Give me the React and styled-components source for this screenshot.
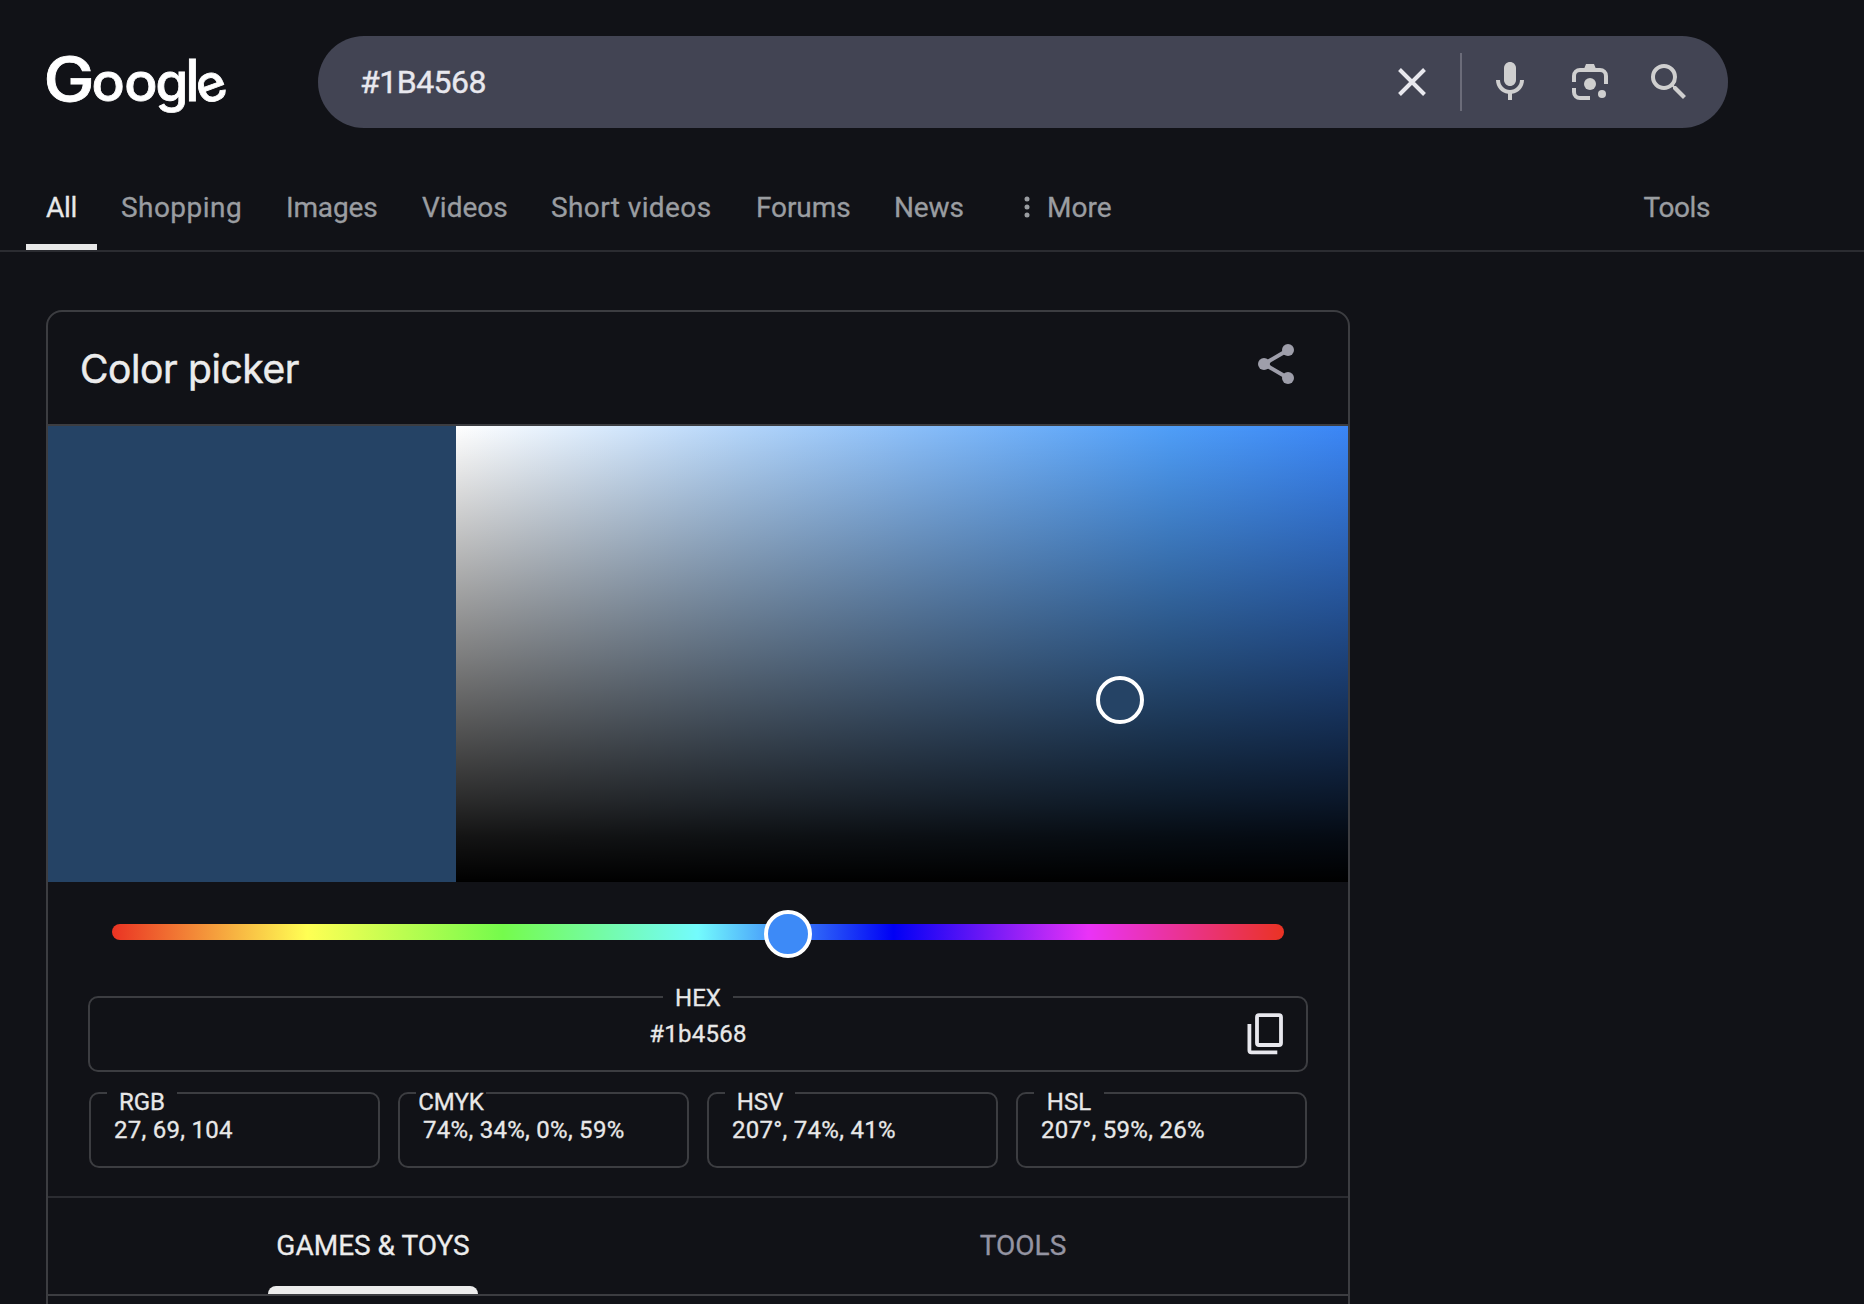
import React from "react";
import styled, { createGlobalStyle } from "styled-components";

const Global = createGlobalStyle`
  * { box-sizing: border-box; }
  html, body { margin: 0; background: #111217; }
  body { overflow: hidden; font-family: Roboto, "Liberation Sans", sans-serif; color: #e8e8e8; }
  svg { display: block; flex: none; }
`;

const Page = styled.div`
  width: 1864px;
  height: 1304px;
  overflow: hidden;
  background: #111217;
`;

const TopBar = styled.header`
  display: flex;
  height: 128px;
  padding: 36px 0 0 46px;
`;

const Logo = styled.div`
  display: flex;
  align-items: baseline;
  width: 272px;
  padding-top: 5px;
  font-family: Inter, sans-serif;
  font-weight: 500;
  line-height: 76px;
  color: #fff;
  -webkit-text-stroke: 0.8px #fff;
`;

const Letter = styled.span`
  display: flex;
  justify-content: center;
  flex: none;
  width: ${(p) => p.$w}px;
  font-size: ${(p) => p.$size}px;
  transform: rotate(${(p) => p.$tilt || 0}deg) scaleX(${(p) => p.$stretch || 1});
  transform-origin: 50% 60%;
`;

const SearchBox = styled.div`
  display: flex;
  align-items: center;
  width: 1410px;
  height: 92px;
  padding: 0 41px 0 42px;
  border-radius: 46px;
  background: #424453;
`;

const Query = styled.div`
  flex: 1;
  font-size: 32px;
  line-height: 40px;
  letter-spacing: -0.5px;
  color: #e8e8ee;
  -webkit-text-stroke: 0.4px #e8e8ee;
`;

const Separator = styled.div`
  width: 2px;
  height: 58px;
  margin: 0 24px 0 34px;
  background: #6b6c79;
`;

const LensSlot = styled.div`
  padding: 0 37px 0 38px;
`;

const Nav = styled.nav`
  display: flex;
  align-items: stretch;
  height: 124px;
  padding: 50px 154px 0 26px;
  border-bottom: 2px solid #2b2c31;
`;

const NavItem = styled.a`
  display: flex;
  align-items: flex-start;
  width: ${(p) => p.$w}px;
  padding: 13px 0 0 ${(p) => p.$pad || 0}px;
  margin-right: ${(p) => p.$gap || 0}px;
  font-size: 28px;
  line-height: 34px;
  letter-spacing: ${(p) => p.$track || 0}px;
  white-space: nowrap;
  color: ${(p) => (p.$active ? "#e8e8e8" : "#9a9da1")};
  -webkit-text-stroke: 0.3px currentColor;
  border-bottom: 6px solid ${(p) => (p.$active ? "#e8e8e8" : "transparent")};
`;

const Dots = styled.svg`
  margin: 5px 17px 0 0;
`;

const Spacer = styled.div`
  flex: 1;
`;

const Card = styled.main`
  width: 1304px;
  height: 1020px;
  margin: 58px 0 0 46px;
  border: 2px solid #3c3d41;
  border-radius: 16px;
`;

const CardHeader = styled.div`
  display: flex;
  justify-content: space-between;
  align-items: flex-start;
  height: 114px;
  padding: 28px 48px 0 32px;
  border-bottom: 2px solid #3c3d41;
`;

const Title = styled.h1`
  margin: 0;
  font-family: Inter, sans-serif;
  font-size: 39px;
  line-height: 57px;
  font-weight: 400;
  letter-spacing: -0.4px;
  color: #ececec;
  -webkit-text-stroke: 0.5px currentColor;
`;

const Picker = styled.div`
  display: flex;
  height: 456px;
`;

const Swatch = styled.div`
  width: 408px;
  background: #254365;
`;

const Shade = styled.div`
  position: relative;
  flex: 1;
  background: linear-gradient(
      to top,
      #000,
      rgba(0, 0, 0, 0.92) 10%,
      rgba(0, 0, 0, 0.83) 18%,
      rgba(0, 0, 0, 0.5) 50%,
      rgba(0, 0, 0, 0)
    ),
    linear-gradient(to right, #fff, #b3d5fa 32%, #88bdf9 52%, #4f9ef8 80%, #3b86f6);
`;

const Handle = styled.div`
  position: absolute;
  left: ${(p) => p.$x}px;
  top: ${(p) => p.$y}px;
  width: 48px;
  height: 48px;
  border: 4px solid #fff;
  border-radius: 50%;
  background: ${(p) => p.$fill};
`;

const Hue = styled.div`
  position: relative;
  height: 16px;
  margin: 42px 64px 0;
  border-radius: 8px;
  background: linear-gradient(
    to right,
    #ea3323,
    #ffff54 16.67%,
    #75fb4c 33.33%,
    #73fbfd 50%,
    #0000f5 66.67%,
    #ea33f7 83.33%,
    #ea3323
  );
`;

const HexField = styled.div`
  display: grid;
  grid-template-columns: 1fr auto 1fr;
  height: 76px;
  margin: 56px 40px 0;
  border: 2px solid #3c3d41;
  border-radius: 10px;
`;

const HexCenter = styled.div`
  grid-column: 2;
  display: flex;
  flex-direction: column;
  align-items: center;
  width: 140px;
  margin-top: -18px;
`;

const Label = styled.div`
  width: 70px;
  height: 36px;
  font-size: 24px;
  line-height: 36px;
  text-align: center;
  background: #111217;
  -webkit-text-stroke: 0.3px currentColor;
`;

const Value = styled.div`
  font-size: 24px;
  line-height: 36px;
  letter-spacing: 0.28px;
  white-space: nowrap;
  -webkit-text-stroke: 0.3px currentColor;
`;

const CopyButton = styled.div`
  grid-column: 3;
  justify-self: end;
  margin: 15px 23px 0 0;
`;

const Fields = styled.div`
  display: grid;
  grid-template-columns: repeat(4, 291px);
  gap: 18px;
  margin: 20px 41px 0;
`;

const Field = styled.div`
  height: 76px;
  border: 2px solid #3c3d41;
  border-radius: 10px;
`;

const FieldLabel = styled(Label)`
  height: 22px;
  margin: -2px 0 0 16px;
  line-height: 20px;
`;

const FieldValue = styled(Value)`
  margin: 0 0 0 23px;
  line-height: 32px;
`;

const Tabs = styled.div`
  display: grid;
  grid-template-columns: 1fr 1fr;
  justify-items: center;
  height: 100px;
  margin-top: 28px;
  border-top: 2px solid #2b2c31;
  border-bottom: 2px solid #3c3d41;
`;

const Tab = styled.div`
  display: flex;
  flex-direction: column;
  justify-content: space-between;
  padding: 30px 8px 0;
  font-size: 28px;
  line-height: 36px;
  color: ${(p) => (p.$active ? "#ececec" : "#9494a2")};
  -webkit-text-stroke: 0.3px currentColor;
`;

const TabMark = styled.div`
  height: 8px;
  margin: 0 -8px;
  border-radius: 8px 8px 0 0;
  background: #ececec;
`;

const links = [
  { t: "Shopping", w: 165, k: 0.45 },
  { t: "Images", w: 136, k: -0.15 },
  { t: "Videos", w: 129, k: 0 },
  { t: "Short videos", w: 205, k: 0.4 },
  { t: "Forums", w: 138, k: -0.1 },
  { t: "News", w: 130, k: -0.1 },
];

const fields = [
  { l: "RGB", v: "27, 69, 104" },
  { l: "CMYK", v: "74%, 34%, 0%, 59%" },
  { l: "HSV", v: "207°, 74%, 41%" },
  { l: "HSL", v: "207°, 59%, 26%" },
];

export default function App() {
  return (
    <Page>
      <Global />
      <TopBar>
        <Logo>
          <Letter $w={46} $size={61} $stretch={1.12}>G</Letter>
          <Letter $w={32.5} $size={53} $stretch={1.04}>o</Letter>
          <Letter $w={32} $size={53} $stretch={1.04}>o</Letter>
          <Letter $w={31} $size={53}>g</Letter>
          <Letter $w={10} $size={57}>l</Letter>
          <Letter $w={29} $size={51} $tilt={-20}>e</Letter>
        </Logo>
        <SearchBox>
          <Query>#1B4568</Query>
          <svg width="28" height="28" viewBox="0 0 28 28" stroke="#e8e8ee" strokeWidth="4" fill="none">
            <path d="M1.5 1.5 26.5 26.5M26.5 1.5 1.5 26.5" />
          </svg>
          <Separator />
          <svg width="48" height="48" viewBox="0 0 24 24" fill="#cfcfcf">
            <path d="M12 14c1.66 0 3-1.34 3-3V5c0-1.66-1.34-3-3-3S9 3.34 9 5v6c0 1.66 1.34 3 3 3z" />
            <path d="M17 11c0 2.76-2.24 5-5 5s-5-2.24-5-5H5c0 3.53 2.61 6.43 6 6.92V21h2v-3.08c3.39-.49 6-3.39 6-6.92h-2z" />
          </svg>
          <LensSlot>
            <svg width="36" height="36" viewBox="0 0 36 36" fill="none">
              <path d="M2 18V12a6 6 0 0 1 6-6H28a6 6 0 0 1 6 6V20M2 24V28a6 6 0 0 0 6 6H18" stroke="#cfcfcf" strokeWidth="4" />
              <path d="M12 5 14 0H22L24 5Z" fill="#cfcfcf" />
              <circle cx="18" cy="20" r="6" fill="#cfcfcf" />
              <circle cx="30" cy="30" r="4" fill="#cfcfcf" />
            </svg>
          </LensSlot>
          <svg width="42" height="48" viewBox="0 0 21 24" fill="#cfcfcf">
            <path d="M15.5 14h-.79l-.28-.27A6.471 6.471 0 0 0 16 9.5 6.5 6.5 0 1 0 9.5 16c1.61 0 3.09-.59 4.23-1.57l.27.28v.79l5 4.99L20.49 19l-4.99-5zm-6 0C7.01 14 5 11.99 5 9.5S7.01 5 9.5 5 14 7.01 14 9.5 11.99 14 9.5 14z" />
          </svg>
        </SearchBox>
      </TopBar>
      <Nav>
        <NavItem $active $w={71} $pad={20} $gap={24} $track={-0.3}>All</NavItem>
        {links.map((n) => (
          <NavItem key={n.t} $w={n.w} $track={n.k}>{n.t}</NavItem>
        ))}
        <NavItem>
          <Dots width="6" height="22" viewBox="0 0 6 22" fill="#9a9da1">
            <circle cx="3" cy="3" r="2.5" />
            <circle cx="3" cy="11" r="2.5" />
            <circle cx="3" cy="19" r="2.5" />
          </Dots>
          More
        </NavItem>
        <Spacer />
        <NavItem $track={-0.4}>Tools</NavItem>
      </Nav>
      <Card>
        <CardHeader>
          <Title>Color picker</Title>
          <svg width="48" height="48" viewBox="0 0 48 48">
            <path d="M36 10 12 24 36 38" fill="none" stroke="#9e9eaa" strokeWidth="4" />
            <circle cx="36" cy="10" r="6" fill="#9e9eaa" />
            <circle cx="12" cy="24" r="6" fill="#9e9eaa" />
            <circle cx="36" cy="38" r="6" fill="#9e9eaa" />
          </svg>
        </CardHeader>
        <Picker>
          <Swatch />
          <Shade>
            <Handle $x={640} $y={250} $fill="#254365" />
          </Shade>
        </Picker>
        <Hue>
          <Handle $x={652} $y={-14} $fill="#3d8af7" />
        </Hue>
        <HexField>
          <HexCenter>
            <Label>HEX</Label>
            <Value>#1b4568</Value>
          </HexCenter>
          <CopyButton>
            <svg width="37" height="42" viewBox="0 0 37 42" fill="none" stroke="#e8e8ee" strokeWidth="3.8">
              <rect x="11" y="2.2" width="24" height="29.8" rx="2" />
              <path d="M3.4 11V37.2Q3.4 39.3 5.4 39.3H31.3" />
            </svg>
          </CopyButton>
        </HexField>
        <Fields>
          {fields.map((f) => (
            <Field key={f.l}>
              <FieldLabel>{f.l}</FieldLabel>
              <FieldValue>{f.v}</FieldValue>
            </Field>
          ))}
        </Fields>
        <Tabs>
          <Tab $active>
            GAMES &amp; TOYS
            <TabMark />
          </Tab>
          <Tab>TOOLS</Tab>
        </Tabs>
      </Card>
    </Page>
  );
}
